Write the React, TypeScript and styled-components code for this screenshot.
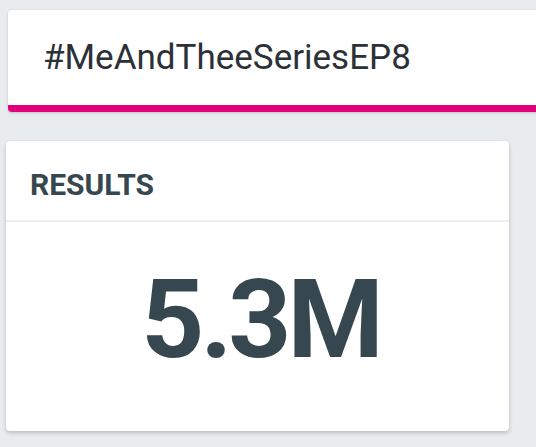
import styled, { createGlobalStyle } from "styled-components";

const GlobalStyle = createGlobalStyle`
  html, body {
    margin: 0;
    padding: 0;
    background: #e9ecef;
    overflow: hidden;
  }
  body {
    font-family: Roboto, "Liberation Sans", Arial, sans-serif;
  }
`;

const Page = styled.div`
  display: flex;
  flex-direction: column;
  padding-top: 10px;
  overflow: hidden;
  height: 447px;
  box-sizing: border-box;
`;

const SearchBar = styled.div`
  margin-left: 8px;
  margin-right: -20px;
  height: 95px;
  display: flex;
  align-items: center;
  padding-left: 35px;
  background: #ffffff;
  border-bottom: 7px solid #e2007a;
  border-radius: 4px 0 0 4px;
  box-shadow: 0 1px 3px rgba(0, 0, 0, 0.18);
  flex-shrink: 0;
`;

const Query = styled.span`
  font-size: 35px;
  line-height: 1;
  color: #2b3136;
`;

const Card = styled.section`
  margin: 29px 0 0 6px;
  width: 503px;
  background: #ffffff;
  border-radius: 4px;
  box-shadow: 0 2px 4px rgba(0, 0, 0, 0.2);
  flex-shrink: 0;
`;

const CardHeader = styled.header`
  height: 81px;
  box-sizing: border-box;
  padding: 29px 0 0 24px;
  border-bottom: 2px solid #eceef0;
`;

const Title = styled.h2`
  margin: 0;
  font-size: 30px;
  line-height: 1;
  font-weight: 700;
  color: #37474f;
`;

const CardBody = styled.div`
  height: 209px;
  box-sizing: border-box;
  padding-top: 43px;
  display: flex;
  justify-content: center;
`;

const BigNumber = styled.div`
  margin-left: 6px;
  font-size: 110px;
  line-height: 1;
  font-weight: 700;
  letter-spacing: -4px;
  color: #37474f;
`;

export default function App() {
  return (
    <>
      <GlobalStyle />
      <Page>
        <SearchBar>
          <Query>#MeAndTheeSeriesEP8</Query>
        </SearchBar>
        <Card>
          <CardHeader>
            <Title>RESULTS</Title>
          </CardHeader>
          <CardBody>
            <BigNumber>5.3M</BigNumber>
          </CardBody>
        </Card>
      </Page>
    </>
  );
}
